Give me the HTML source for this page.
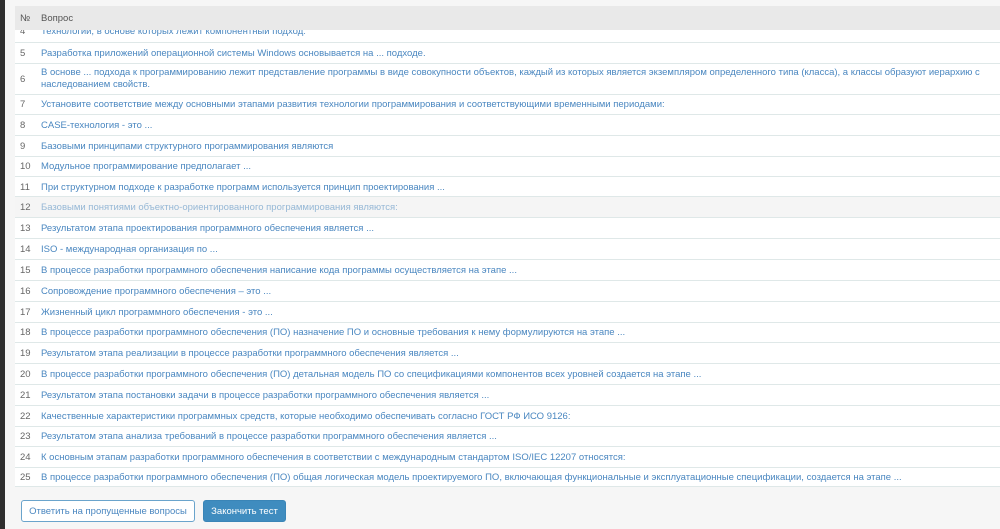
<!DOCTYPE html>
<html><head><meta charset="utf-8"><style>
html,body{margin:0;padding:0;width:1000px;height:529px;overflow:hidden;background:#f6f6f6;font-family:"Liberation Sans",Arial,sans-serif;}
.strip{position:absolute;left:0;top:0;width:5px;height:529px;background:#2e2e2e}
.tbl{position:absolute;left:15px;top:6px;width:985px;height:481px;background:#fff;overflow:hidden}
.hdr{position:absolute;left:0;top:0;width:985px;height:24px;background:#e9e9e9;z-index:2;font-size:9.5px;color:#555}
.hdr span{position:absolute;top:7px}
.row{position:absolute;left:0;width:985px;border-bottom:1px solid #dfe8e8;font-size:9.5px;line-height:12px}
.row .n{position:absolute;left:5px;color:#666;top:5px}
.row .t{position:absolute;left:26px;color:#4a87c0;width:950px;top:5px}
.row.hl{background:#f5f5f5}
.row.hl .t{color:#96b8d6}
.btn{position:absolute;top:500px;height:22px;box-sizing:border-box;border-radius:3px;font-size:9.5px;line-height:21px;text-align:center}
.b1{left:21px;width:174px;border:1px solid #6aa4cc;color:#4a87c0;background:#fff}
.b2{left:203px;width:83px;background:#3f8cbf;border:1px solid #3a85b7;color:#fff}
</style></head><body>
<div class="strip"></div>
<div class="tbl">
<div class="hdr"><span style="left:5px">№</span><span style="left:26px">Вопрос</span></div>
<div class="row" style="top:16px;height:20px"><span class="n" style="top:4px">4</span><span class="t" style="top:4px">Технологии, в основе которых лежит компонентный подход:</span></div>
<div class="row" style="top:37px;height:20px"><span class="n">5</span><span class="t">Разработка приложений операционной системы Windows основывается на ... подходе.</span></div>
<div class="row" style="top:58px;height:30px"><span class="n" style="top:10px">6</span><span class="t" style="top:3px">В основе ... подхода к программированию лежит представление программы в виде совокупности объектов, каждый из которых является экземпляром определенного типа (класса), а классы образуют иерархию с наследованием свойств.</span></div>
<div class="row" style="top:89px;height:19px"><span class="n" style="top:4px">7</span><span class="t" style="top:4px">Установите соответствие между основными этапами развития технологии программирования и соответствующими временными периодами:</span></div>
<div class="row" style="top:109px;height:20px"><span class="n">8</span><span class="t">CASE-технология - это ...</span></div>
<div class="row" style="top:130px;height:20px"><span class="n">9</span><span class="t">Базовыми принципами структурного программирования являются</span></div>
<div class="row" style="top:150px;height:20px"><span class="n">10</span><span class="t">Модульное программирование предполагает ...</span></div>
<div class="row" style="top:171px;height:19px"><span class="n">11</span><span class="t">При структурном подходе к разработке программ используется принцип проектирования ...</span></div>
<div class="row hl" style="top:191px;height:20px"><span class="n">12</span><span class="t">Базовыми понятиями объектно-ориентированного программирования являются:</span></div>
<div class="row" style="top:212px;height:20px"><span class="n">13</span><span class="t">Результатом этапа проектирования программного обеспечения является ...</span></div>
<div class="row" style="top:233px;height:20px"><span class="n">14</span><span class="t">ISO - международная организация по ...</span></div>
<div class="row" style="top:254px;height:20px"><span class="n">15</span><span class="t">В процессе разработки программного обеспечения написание кода программы осуществляется на этапе ...</span></div>
<div class="row" style="top:275px;height:20px"><span class="n">16</span><span class="t">Сопровождение программного обеспечения – это ...</span></div>
<div class="row" style="top:296px;height:20px"><span class="n">17</span><span class="t">Жизненный цикл программного обеспечения - это ...</span></div>
<div class="row" style="top:316px;height:20px"><span class="n">18</span><span class="t">В процессе разработки программного обеспечения (ПО) назначение ПО и основные требования к нему формулируются на этапе ...</span></div>
<div class="row" style="top:337px;height:20px"><span class="n">19</span><span class="t">Результатом этапа реализации в процессе разработки программного обеспечения является ...</span></div>
<div class="row" style="top:358px;height:20px"><span class="n">20</span><span class="t">В процессе разработки программного обеспечения (ПО) детальная модель ПО со спецификациями компонентов всех уровней создается на этапе ...</span></div>
<div class="row" style="top:379px;height:20px"><span class="n">21</span><span class="t">Результатом этапа постановки задачи в процессе разработки программного обеспечения является ...</span></div>
<div class="row" style="top:400px;height:20px"><span class="n">22</span><span class="t">Качественные характеристики программных средств, которые необходимо обеспечивать согласно ГОСТ РФ ИСО 9126:</span></div>
<div class="row" style="top:420px;height:20px"><span class="n">23</span><span class="t">Результатом этапа анализа требований в процессе разработки программного обеспечения является ...</span></div>
<div class="row" style="top:441px;height:20px"><span class="n">24</span><span class="t">К основным этапам разработки программного обеспечения в соответствии с международным стандартом ISO/IEC 12207 относятся:</span></div>
<div class="row" style="top:462px;height:18px"><span class="n" style="top:4px">25</span><span class="t" style="top:4px">В процессе разработки программного обеспечения (ПО) общая логическая модель проектируемого ПО, включающая функциональные и эксплуатационные спецификации, создается на этапе ...</span></div>
</div>
<div class="btn b1">Ответить на пропущенные вопросы</div>
<div class="btn b2">Закончить тест</div>
</body></html>
